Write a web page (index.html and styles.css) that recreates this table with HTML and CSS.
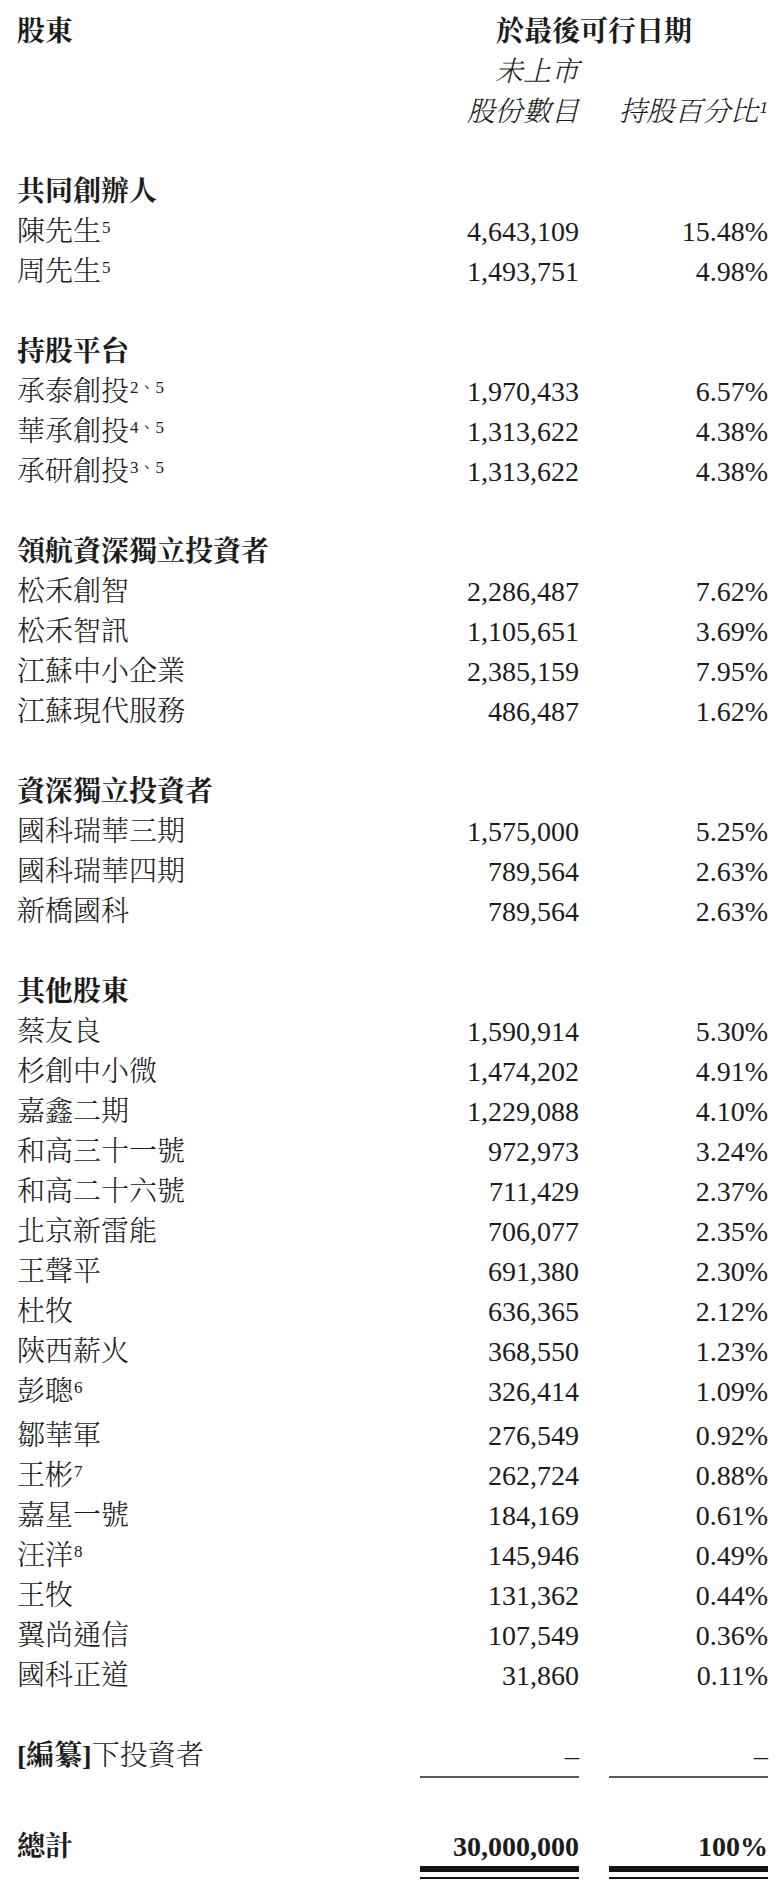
FILE: index.html
```html
<!DOCTYPE html>
<html lang="zh-Hant">
<head>
<meta charset="utf-8">
<title>股東</title>
<link rel="stylesheet" href="styles.css">
</head>
<body>
<div class="sheet">
  <div class="row">
    <div class="name bold">股東</div>
    <div class="span2 bold">於最後可行日期</div>
  </div>
  <div class="row">
    <div class="name"></div>
    <div class="num ital">未上市</div>
    <div class="pct"></div>
  </div>
  <div class="row">
    <div class="name"></div>
    <div class="num ital">股份數目</div>
    <div class="pct ital">持股百分比<sup class="note">1</sup></div>
  </div>
  <div class="blank"></div>

  <div class="row"><div class="name bold">共同創辦人</div></div>
  <div class="row"><div class="name">陳先生<sup class="note">5</sup></div><div class="num">4,643,109</div><div class="pct">15.48%</div></div>
  <div class="row"><div class="name">周先生<sup class="note">5</sup></div><div class="num">1,493,751</div><div class="pct">4.98%</div></div>
  <div class="blank"></div>

  <div class="row"><div class="name bold">持股平台</div></div>
  <div class="row"><div class="name">承泰創投<sup class="note">2、5</sup></div><div class="num">1,970,433</div><div class="pct">6.57%</div></div>
  <div class="row"><div class="name">華承創投<sup class="note">4、5</sup></div><div class="num">1,313,622</div><div class="pct">4.38%</div></div>
  <div class="row"><div class="name">承研創投<sup class="note">3、5</sup></div><div class="num">1,313,622</div><div class="pct">4.38%</div></div>
  <div class="blank"></div>

  <div class="row"><div class="name bold">領航資深獨立投資者</div></div>
  <div class="row"><div class="name">松禾創智</div><div class="num">2,286,487</div><div class="pct">7.62%</div></div>
  <div class="row"><div class="name">松禾智訊</div><div class="num">1,105,651</div><div class="pct">3.69%</div></div>
  <div class="row"><div class="name">江蘇中小企業</div><div class="num">2,385,159</div><div class="pct">7.95%</div></div>
  <div class="row"><div class="name">江蘇現代服務</div><div class="num">486,487</div><div class="pct">1.62%</div></div>
  <div class="blank"></div>

  <div class="row"><div class="name bold">資深獨立投資者</div></div>
  <div class="row"><div class="name">國科瑞華三期</div><div class="num">1,575,000</div><div class="pct">5.25%</div></div>
  <div class="row"><div class="name">國科瑞華四期</div><div class="num">789,564</div><div class="pct">2.63%</div></div>
  <div class="row"><div class="name">新橋國科</div><div class="num">789,564</div><div class="pct">2.63%</div></div>
  <div class="blank"></div>

  <div class="row"><div class="name bold">其他股東</div></div>
  <div class="row"><div class="name">蔡友良</div><div class="num">1,590,914</div><div class="pct">5.30%</div></div>
  <div class="row"><div class="name">杉創中小微</div><div class="num">1,474,202</div><div class="pct">4.91%</div></div>
  <div class="row"><div class="name">嘉鑫二期</div><div class="num">1,229,088</div><div class="pct">4.10%</div></div>
  <div class="row"><div class="name">和高三十一號</div><div class="num">972,973</div><div class="pct">3.24%</div></div>
  <div class="row"><div class="name">和高二十六號</div><div class="num">711,429</div><div class="pct">2.37%</div></div>
  <div class="row"><div class="name">北京新雷能</div><div class="num">706,077</div><div class="pct">2.35%</div></div>
  <div class="row"><div class="name">王聲平</div><div class="num">691,380</div><div class="pct">2.30%</div></div>
  <div class="row"><div class="name">杜牧</div><div class="num">636,365</div><div class="pct">2.12%</div></div>
  <div class="row"><div class="name">陝西薪火</div><div class="num">368,550</div><div class="pct">1.23%</div></div>
  <div class="row"><div class="name">彭聰<sup class="note">6</sup></div><div class="num">326,414</div><div class="pct">1.09%</div></div>
  <div class="row shifted"><div class="name">鄒華軍</div><div class="num">276,549</div><div class="pct">0.92%</div></div>
  <div class="row"><div class="name">王彬<sup class="note">7</sup></div><div class="num">262,724</div><div class="pct">0.88%</div></div>
  <div class="row"><div class="name">嘉星一號</div><div class="num">184,169</div><div class="pct">0.61%</div></div>
  <div class="row"><div class="name">汪洋<sup class="note">8</sup></div><div class="num">145,946</div><div class="pct">0.49%</div></div>
  <div class="row"><div class="name">王牧</div><div class="num">131,362</div><div class="pct">0.44%</div></div>
  <div class="row"><div class="name">翼尚通信</div><div class="num">107,549</div><div class="pct">0.36%</div></div>
  <div class="row"><div class="name">國科正道</div><div class="num">31,860</div><div class="pct">0.11%</div></div>
  <div class="blank"></div>

  <div class="row redacted"><div class="name"><span class="bold">[編纂]</span>下投資者</div><div class="num ruled">–</div><div class="pct ruled">–</div></div>

  <div class="row total"><div class="name bold">總計</div><div class="num bold">30,000,000</div><div class="pct bold">100%</div></div>
  <div class="row double"><div class="name"></div><div class="num dbl"></div><div class="pct dbl"></div></div>
</div>
</body>
</html>
```

FILE: styles.css
```css
html, body {
  margin: 0;
  padding: 0;
  background: #ffffff;
}

.sheet {
  width: 784px;
  box-sizing: border-box;
  padding: 12px 16px 0 17px;
  font-family: "Liberation Serif", "Noto Serif CJK TC", "Noto Sans CJK TC", serif;
  font-size: 28px;
  color: #1c1c1c;
}

.row {
  display: grid;
  grid-template-columns: 1fr 159px 159px;
  column-gap: 30px;
  height: 40px;
  line-height: 40px;
}

.blank {
  height: 40px;
}

.name {
  grid-column: 1;
  white-space: nowrap;
  font-weight: 300;
}

.num {
  grid-column: 2;
  text-align: right;
  white-space: nowrap;
}

.pct {
  grid-column: 3;
  text-align: right;
  white-space: nowrap;
}

.span2 {
  grid-column: 2 / 4;
  text-align: center;
  white-space: nowrap;
}

.bold {
  font-weight: 700;
}

.ital {
  font-style: italic;
  font-weight: 300;
}

.note {
  font-size: 17px;
  line-height: 0;
  vertical-align: 8px;
  font-weight: 400;
  font-style: normal;
  margin-left: 1px;
}

.ital .note {
  font-style: italic;
}

.shifted {
  margin-top: 4px;
}

.redacted {
  height: 42px;
  line-height: 40px;
}

.ruled {
  border-bottom: 2px solid #5a5a5a;
}

.total {
  margin-top: 49px;
  height: 39px;
  line-height: 40px;
}

.double {
  height: 13px;
}

.dbl {
  box-sizing: border-box;
  height: 13px;
  border-top: 6px solid #141414;
  border-bottom: 2px solid #141414;
}
```
